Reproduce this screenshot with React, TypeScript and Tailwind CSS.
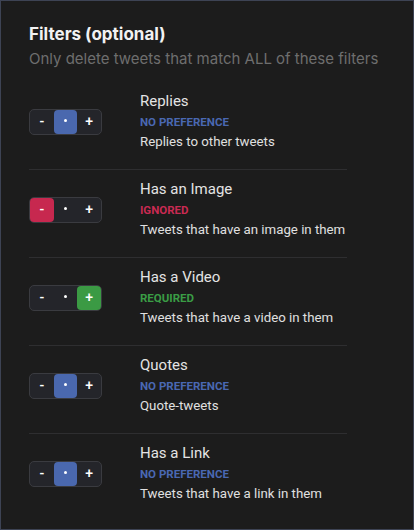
import React from "react";

type Pref = "ignore" | "none" | "require";

interface Filter {
  title: string;
  description: string;
  pref: Pref;
}

const filters: Filter[] = [
  { title: "Replies", description: "Replies to other tweets", pref: "none" },
  { title: "Has an Image", description: "Tweets that have an image in them", pref: "ignore" },
  { title: "Has a Video", description: "Tweets that have a video in them", pref: "require" },
  { title: "Quotes", description: "Quote-tweets", pref: "none" },
  { title: "Has a Link", description: "Tweets that have a link in them", pref: "none" },
];

const statusLabel: Record<Pref, { text: string; className: string }> = {
  none: { text: "NO PREFERENCE", className: "text-[#4a68b2]" },
  ignore: { text: "IGNORED", className: "text-[#c92a52]" },
  require: { text: "REQUIRED", className: "text-[#3a9c45]" },
};

const TriToggle: React.FC<{ pref: Pref }> = ({ pref }) => {
  const seg = "w-6 h-full flex items-center justify-center text-[14px] font-medium text-white rounded-[4px]";
  return (
    <div className="flex h-[26px] w-[73px] rounded-[5px] border border-[#3a3b40] bg-[#24252a]">
      <div className={`${seg} ${pref === "ignore" ? "bg-[#c7284f]" : ""}`}>-</div>
      <div className={`${seg} ${pref === "none" ? "bg-[#4a68ae]" : ""}`}>
        <span className="block w-[3px] h-[3px] -mt-[2px] rounded-full bg-white" />
      </div>
      <div className={`${seg} ${pref === "require" ? "bg-[#3b9a44]" : ""}`}>+</div>
    </div>
  );
};

export default function App() {
  return (
    <div
      className="w-[414px] h-[530px] bg-[#1c1c1c] border border-[#3d4354] px-[28px] pt-[22px]"
      style={{ fontFamily: "Roboto, 'Noto Sans', sans-serif" }}
    >
      <h2 className="font-['Inter',sans-serif] text-[17px] leading-[22px] font-bold text-[#f2f2f2]">
        Filters (optional)
      </h2>
      <p className="font-['Inter',sans-serif] mt-[3px] text-[15px] leading-[22px] text-[#6e6e6e]">
        Only delete tweets that match ALL of these filters
      </p>
      <div className="mt-[21px] w-[318px]">
        {filters.map((f, i) => (
          <div
            key={f.title}
            className={`flex items-center pb-[17px] ${
              i < filters.length - 1 ? "border-b border-[#2e2e30]" : ""
            } ${i === 0 ? "pt-0" : "pt-[9px]"}`}
          >
            <div className="w-[111px] shrink-0">
              <TriToggle pref={f.pref} />
            </div>
            <div className="flex flex-col">
              <div className="text-[15px] leading-[20px] text-[#e4e4e4]">{f.title}</div>
              <div className={`mt-[1px] text-[11.5px] leading-[20px] font-bold ${statusLabel[f.pref].className}`}>
                {statusLabel[f.pref].text}
              </div>
              <div className="text-[13.25px] leading-[20px] text-[#e0e0e0]">{f.description}</div>
            </div>
          </div>
        ))}
      </div>
    </div>
  );
}
